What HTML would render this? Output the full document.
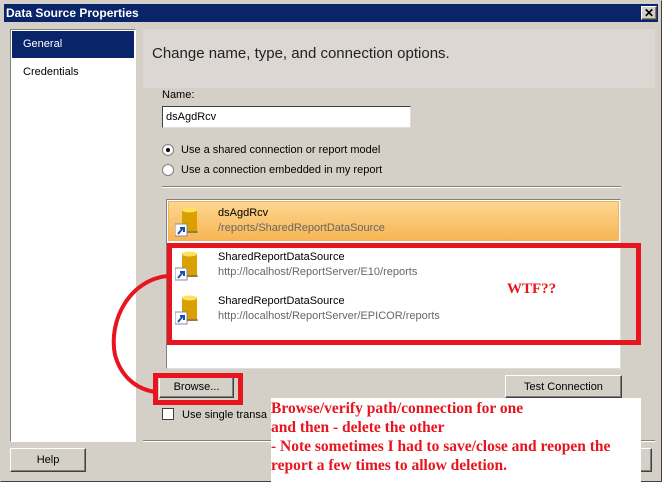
<!DOCTYPE html>
<html><head><style>
*{margin:0;padding:0;box-sizing:border-box}
body{width:662px;height:482px;background:#d4d0c8;font-family:"Liberation Sans",sans-serif;font-size:11px;position:relative;overflow:hidden}
.a{position:absolute}
.btn{position:absolute;background:#d4d0c8;border:1px solid;border-color:#fff #404040 #404040 #fff;box-shadow:inset -1px -1px #808080;text-align:center;font-size:11px}
.red{color:#e8141e;font-family:"Liberation Serif",serif;font-weight:bold}
</style></head><body>
<div class="a" style="left:0;top:0;width:662px;height:482px;border:1px solid;border-color:#d4d0c8 #404040 #404040 #d4d0c8"></div>
<div class="a" style="left:4px;top:4px;width:654px;height:18px;background:#0a246a;color:#fff;font-weight:bold;font-size:12px;padding:2px 0 0 2px">Data Source Properties</div>
<div class="btn" style="left:641px;top:6px;width:16px;height:14px;font-weight:bold;font-size:12px;line-height:12px">✕</div>
<div class="a" style="left:10px;top:29px;width:126px;height:413px;background:#fff;border:1px solid;border-color:#808080 #fff #fff #808080"></div>
<div class="a" style="left:12px;top:31px;width:122px;height:27px;background:#0a246a;color:#fff;padding:7px 0 0 11px;font-size:11px">General</div>
<div class="a" style="left:23px;top:66px">Credentials</div>
<div class="a" style="left:143px;top:29px;width:512px;height:59px;background:#dcd7d3"></div>
<div class="a" style="left:152px;top:45px;font-size:15px;color:#222">Change name, type, and connection options.</div>
<div class="a" style="left:162px;top:89px">Name:</div>
<div class="a" style="left:162px;top:106px;width:249px;height:22px;background:#fff;border:1px solid;border-color:#404040 #ddd #ddd #404040;padding:4px 0 0 3px">dsAgdRcv</div>
<div class="a" style="left:162px;top:144px;width:12px;height:12px;border-radius:50%;background:#fff;border:1px solid #808080"></div>
<div class="a" style="left:166px;top:148px;width:4px;height:4px;border-radius:50%;background:#000"></div>
<div class="a" style="left:181px;top:144px">Use a shared connection or report model</div>
<div class="a" style="left:162px;top:164px;width:12px;height:12px;border-radius:50%;background:#fff;border:1px solid #808080"></div>
<div class="a" style="left:181px;top:164px">Use a connection embedded in my report</div>
<div class="a" style="left:162px;top:186px;width:459px;height:2px;border-top:1px solid #808080;border-bottom:1px solid #fff"></div>
<div class="a" style="left:166px;top:199px;width:455px;height:170px;background:#fff;border:1px solid;border-color:#808080 #ddd #ddd #808080"></div>
<div class="a" style="left:168px;top:201px;width:451px;height:40px;background:linear-gradient(#fdd590,#f7b654);border:1px solid #f0b060"></div>
<svg class="a" style="left:175px;top:207px" width="34" height="34"><rect x="7" y="2" width="15" height="24" fill="#d9a000"/><ellipse cx="14.5" cy="3" rx="7.5" ry="2.5" fill="#ffe060"/><rect x="0" y="17" width="12" height="12" fill="#fff" stroke="#889"/><path d="M3 27 L8 21 M5 21 h4 v4" stroke="#1a4fb0" stroke-width="2" fill="none"/><path d="M12 25 h11" stroke="#557"/></svg>
<svg class="a" style="left:175px;top:251px" width="34" height="34"><rect x="7" y="2" width="15" height="24" fill="#d9a000"/><ellipse cx="14.5" cy="3" rx="7.5" ry="2.5" fill="#ffe060"/><rect x="0" y="17" width="12" height="12" fill="#fff" stroke="#889"/><path d="M3 27 L8 21 M5 21 h4 v4" stroke="#1a4fb0" stroke-width="2" fill="none"/><path d="M12 25 h11" stroke="#557"/></svg>
<svg class="a" style="left:175px;top:295px" width="34" height="34"><rect x="7" y="2" width="15" height="24" fill="#d9a000"/><ellipse cx="14.5" cy="3" rx="7.5" ry="2.5" fill="#ffe060"/><rect x="0" y="17" width="12" height="12" fill="#fff" stroke="#889"/><path d="M3 27 L8 21 M5 21 h4 v4" stroke="#1a4fb0" stroke-width="2" fill="none"/><path d="M12 25 h11" stroke="#557"/></svg>
<div class="a" style="left:218px;top:207px">dsAgdRcv</div>
<div class="a" style="left:218px;top:222px;color:#666">/reports/SharedReportDataSource</div>
<div class="a" style="left:218px;top:251px">SharedReportDataSource</div>
<div class="a" style="left:218px;top:266px;color:#666">http://localhost/ReportServer/E10/reports</div>
<div class="a" style="left:218px;top:295px">SharedReportDataSource</div>
<div class="a" style="left:218px;top:310px;color:#666">http://localhost/ReportServer/EPICOR/reports</div>
<div class="a" style="left:167px;top:243px;width:474px;height:102px;border:5px solid #e8141e"></div>
<div class="red a" style="left:507px;top:281px;font-size:15px">WTF??</div>
<svg class="a" style="left:100px;top:260px" width="80" height="150"><path d="M67 16 C30 20 8 60 15 95 C22 120 40 130 56 132" stroke="#e8141e" stroke-width="4" fill="none"/></svg>
<div class="btn" style="left:159px;top:376px;width:75px;height:22px;padding-top:4px">Browse...</div>
<div class="a" style="left:153px;top:373px;width:90px;height:32px;border:5px solid #e8141e"></div>
<div class="btn" style="left:505px;top:375px;width:117px;height:23px;padding-top:5px">Test Connection</div>
<div class="a" style="left:162px;top:408px;width:12px;height:12px;background:#fff;border:1px solid #404040"></div>
<div class="a" style="left:182px;top:409px">Use single transa</div>
<div class="a" style="left:143px;top:440px;width:512px;height:2px;border-top:1px solid #808080;border-bottom:1px solid #fff"></div>
<div class="btn" style="left:10px;top:448px;width:76px;height:24px;padding-top:5px">Help</div>
<div class="btn" style="left:600px;top:448px;width:52px;height:24px"></div>
<div class="a red" style="left:271px;top:398px;width:370px;height:84px;background:#fff;font-size:15.5px;line-height:19px;padding-top:1px;white-space:nowrap">Browse/verify path/connection for one<br>and then - delete the other<br>- Note sometimes I had to save/close and reopen the<br>report a few times to allow deletion.</div>
</body></html>
